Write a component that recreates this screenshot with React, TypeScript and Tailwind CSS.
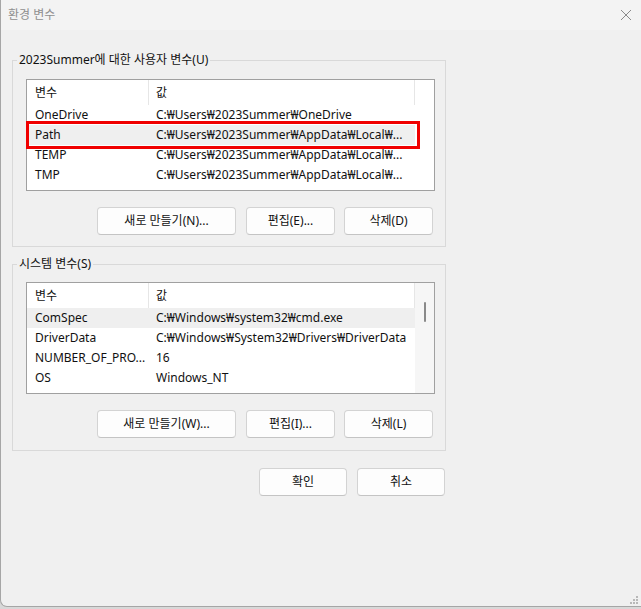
import React from 'react';

interface Row {
  name: string;
  value: string;
  selected?: boolean;
}

const userVars: Row[] = [
  { name: 'OneDrive', value: 'C:₩Users₩2023Summer₩OneDrive' },
  { name: 'Path', value: 'C:₩Users₩2023Summer₩AppData₩Local₩...', selected: true },
  { name: 'TEMP', value: 'C:₩Users₩2023Summer₩AppData₩Local₩...' },
  { name: 'TMP', value: 'C:₩Users₩2023Summer₩AppData₩Local₩...' },
];

const systemVars: Row[] = [
  { name: 'ComSpec', value: 'C:₩Windows₩system32₩cmd.exe', selected: true },
  { name: 'DriverData', value: 'C:₩Windows₩System32₩Drivers₩DriverData' },
  { name: 'NUMBER_OF_PRO...', value: '16' },
  { name: 'OS', value: 'Windows_NT' },
];

function Button({ label, width }: { label: string; width: string }) {
  return (
    <button
      className={`${width} h-[28px] bg-[#fdfdfd] border border-[#d3d3d3] border-b-[#c4c4c4] rounded-[4px] text-[12px] text-[#111] flex items-center justify-center`}
    >
      {label}
    </button>
  );
}

function VarList({ rows, scrollbar, height }: { rows: Row[]; scrollbar?: boolean; height: string }) {
  return (
    <div className={`ml-[13px] w-[409px] ${height} border border-[#a0a0a0] bg-white flex overflow-hidden`}>
      <div className="w-[388px] flex flex-col">
        {/* header */}
        <div className="h-[25px] flex shrink-0 text-[12px] text-[#111]">
          <div className="w-[122px] border-r border-[#e6e6e6] pl-[8px] flex items-center">변수</div>
          <div className="w-[266px] border-r border-[#e6e6e6] pl-[7px] flex items-center">값</div>
        </div>
        {rows.map((r) => (
          <div
            key={r.name + r.value}
            className={`h-[20px] shrink-0 flex text-[12px] text-[#111] whitespace-nowrap ${r.selected ? 'bg-[#efefef]' : ''}`}
          >
            <div className="w-[122px] pl-[8px] flex items-center overflow-hidden">{r.name}</div>
            <div className="w-[266px] pl-[7px] flex items-center overflow-hidden">{r.value}</div>
          </div>
        ))}
      </div>
      {scrollbar ? (
        <div className="flex-1 bg-[#f6f6f6] flex justify-center">
          <div className="mt-[19px] w-[2px] h-[20px] rounded-full bg-[#8a8a8a]" />
        </div>
      ) : (
        <div className="flex-1" />
      )}
    </div>
  );
}

export default function App() {
  return (
    <div className="w-[641px] h-[609px] bg-[#d8d8d8] font-['Noto_Sans','Noto_Sans_CJK_KR',sans-serif]">
      <div className="h-[607px] bg-[#f0f0f0] border-l border-b border-[#a6a6a6] rounded-bl-[7px] flex flex-col relative">
        {/* title bar */}
        <div className="h-[30px] bg-[#f3f3f3] flex items-center justify-between pl-[7px] pr-[8px] shrink-0">
          <span className="text-[12px] text-[#8f8f8f]">환경 변수</span>
          <svg width="12" height="12" viewBox="0 0 12 12" className="mr-[1px]">
            <path d="M1 1 L11 11 M11 1 L1 11" stroke="#8a8a8a" strokeWidth="1" fill="none" />
          </svg>
        </div>

        <div className="pl-[11px] pt-[22px] w-[444px]">
          {/* user variables */}
          <fieldset className="w-[434px] border border-[#d9d9d9] pb-[11px]">
            <legend className="ml-[4px] px-[2px] text-[12px] leading-[16px] text-[#111]">
              2023Summer에 대한 사용자 변수(U)
            </legend>
            <div className="mt-[11px] relative">
              <VarList rows={userVars} height="h-[112px]" />
              <div className="absolute left-[13px] top-[42px] w-[394px] h-[28px] border-[3px] border-[#f00000]" />
            </div>
            <div className="mt-[16px] ml-[84px] flex gap-[9px]">
              <Button label="새로 만들기(N)..." width="w-[139px] mr-[1px]" />
              <Button label="편집(E)..." width="w-[89px]" />
              <Button label="삭제(D)" width="w-[89px]" />
            </div>
          </fieldset>

          {/* system variables */}
          <fieldset className="mt-[9px] w-[434px] border border-[#d9d9d9] pb-[12px]">
            <legend className="ml-[4px] px-[2px] text-[12px] leading-[16px] text-[#111]">시스템 변수(S)</legend>
            <div className="mt-[10px]">
              <VarList rows={systemVars} scrollbar height="h-[112px]" />
            </div>
            <div className="mt-[16px] ml-[84px] flex gap-[9px]">
              <Button label="새로 만들기(W)..." width="w-[139px] mr-[1px]" />
              <Button label="편집(I)..." width="w-[89px]" />
              <Button label="삭제(L)" width="w-[89px]" />
            </div>
          </fieldset>

          <div className="mt-[17px] flex justify-end gap-[10px]">
            <Button label="확인" width="w-[88px]" />
            <Button label="취소" width="w-[88px]" />
          </div>
        </div>

        {/* resize grip */}
        <svg width="8" height="8" viewBox="0 0 8 8" className="absolute right-[3px] bottom-[2px]">
          <rect x="6" y="0" width="2" height="2" fill="#b8b8b8" />
          <rect x="3" y="3" width="2" height="2" fill="#b8b8b8" />
          <rect x="6" y="3" width="2" height="2" fill="#b8b8b8" />
          <rect x="0" y="6" width="2" height="2" fill="#b8b8b8" />
          <rect x="3" y="6" width="2" height="2" fill="#b8b8b8" />
          <rect x="6" y="6" width="2" height="2" fill="#b8b8b8" />
        </svg>
      </div>
    </div>
  );
}
